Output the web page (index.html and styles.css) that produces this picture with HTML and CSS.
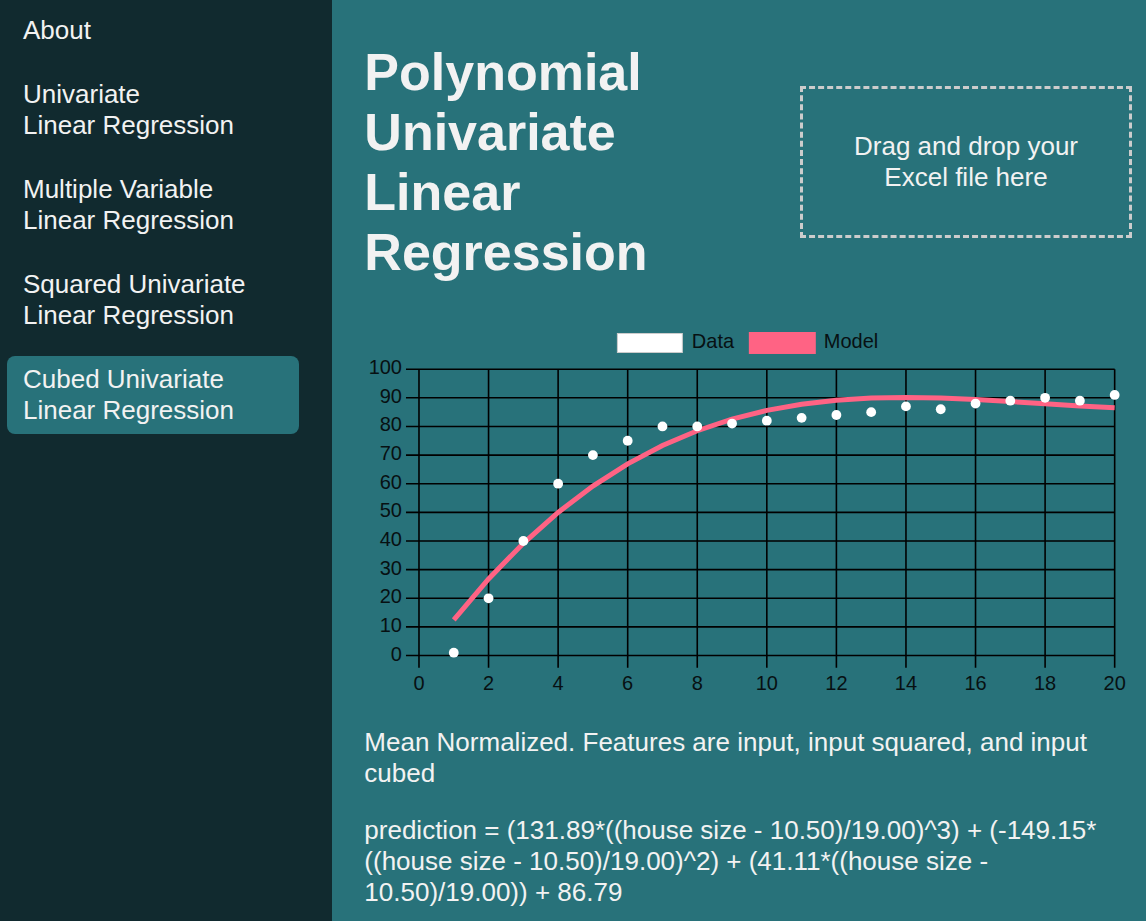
FILE: index.html
```html
<!DOCTYPE html>
<html lang="en">
<head>
<meta charset="utf-8">
<meta name="viewport" content="width=device-width, initial-scale=1">
<title>Polynomial Univariate Linear Regression</title>
<link rel="stylesheet" href="styles.css">
</head>
<body>
<div class="layout">
  <nav class="sidebar" aria-label="Models">
    <a class="nav-link" href="#about">About</a>
    <a class="nav-link" href="#univariate">Univariate<br>Linear Regression</a>
    <a class="nav-link" href="#multiple">Multiple Variable<br>Linear Regression</a>
    <a class="nav-link" href="#squared">Squared Univariate<br>Linear Regression</a>
    <a class="nav-link active" href="#cubed" aria-current="page">Cubed Univariate<br>Linear Regression</a>
  </nav>
  <main class="content">
    <header class="page-header">
      <h1 class="title">Polynomial Univariate Linear Regression</h1>
      <button class="drop-zone" type="button">Drag and drop your Excel file here</button>
    </header>
    <svg class="chart" viewBox="0 0 768 380" role="img" aria-label="Data and model chart">
      <g id="grid" class="grid"></g>
      <g id="labels" class="chart-text"></g>
      <polyline id="model" class="model-line"></polyline>
      <g id="data" class="data-points"></g>
      <rect class="key-data" x="253.5" y="13.5" width="65" height="19"></rect>
      <text class="chart-text" x="328" y="28">Data</text>
      <rect class="key-model" x="385" y="12" width="67" height="22"></rect>
      <text class="chart-text" x="460" y="28">Model</text>
    </svg>
    <p class="note">Mean Normalized. Features are input, input squared, and input cubed</p>
    <p class="note">prediction = (131.89*((house size - 10.50)/19.00)^3) + (-149.15*((house size - 10.50)/19.00)^2) + (41.11*((house size - 10.50)/19.00)) + 86.79</p>
  </main>
</div>
<script src="chart.js"></script>
</body>
</html>
```
FILE: styles.css
```css
* { box-sizing: border-box; }

body {
  margin: 0;
  background: #28727a;
  color: #f2f2f2;
  font: 26px/31px "Liberation Sans", Arial, sans-serif;
}

.layout {
  display: flex;
  min-height: 100vh;
}

.sidebar {
  flex: 0 0 29%;
  display: flex;
  flex-direction: column;
  gap: 17px;
  padding: 7px 33px 7px 7px;
  background: #112a2f;
}

.nav-link {
  padding: 8px 16px;
  border-radius: 8px;
  color: inherit;
  text-decoration: none;
}

.nav-link.active { background: #28727a; }

.content {
  flex: 1;
  min-width: 0;
  padding: 42px 14px 13px 32px;
}

.page-header {
  display: grid;
  grid-template-columns: 1fr 332px;
  column-gap: 52px;
  align-items: center;
  margin-bottom: 38px;
}

.title {
  margin: 0;
  font-size: 52px;
  line-height: 60px;
}

.drop-zone {
  padding: 42px;
  border: 3px dashed #ccc;
  background: transparent;
  color: inherit;
  font: inherit;
  text-align: center;
  cursor: pointer;
}

.chart {
  display: block;
  width: 100%;
  height: auto;
  margin-bottom: 27px;
}

.chart-text {
  fill: #071012;
  font-size: 20px;
}

.end { text-anchor: end; }
.middle { text-anchor: middle; }

.grid {
  stroke: #000;
  stroke-width: 1.6;
}

.model-line {
  fill: none;
  stroke: #ff6384;
  stroke-width: 5;
}

.data-points { fill: #fff; }

.key-data {
  fill: #fff;
  stroke: #ccc;
}

.key-model { fill: #ff6384; }

.note { margin: 0 0 26px; }
.note:last-child { margin-bottom: 0; }
```
FILE: chart.js
```js
const SVG = "http://www.w3.org/2000/svg";
const px = x => 55 + x * 34.8;
const py = y => 335.7 - y * 2.865;

function add(parentId, name, attrs, text) {
  const el = document.createElementNS(SVG, name);
  for (const key in attrs) el.setAttribute(key, attrs[key]);
  if (text !== undefined) el.textContent = text;
  document.getElementById(parentId).appendChild(el);
}

for (let v = 0; v <= 100; v += 10) {
  add("grid", "line", { x1: 42, x2: px(20), y1: py(v), y2: py(v) });
  add("labels", "text", { class: "end", x: 38, y: py(v) + 5 }, v);
}
for (let v = 0; v <= 20; v += 2) {
  add("grid", "line", { x1: px(v), x2: px(v), y1: py(100), y2: 348 });
  add("labels", "text", { class: "middle", x: px(v), y: 370 }, v);
}

const data = [1, 20, 40, 60, 70, 75, 80, 80, 81, 82, 83, 84, 85, 87, 86, 88, 89, 90, 89, 91];
data.forEach((y, i) => add("data", "circle", { cx: px(i + 1), cy: py(y), r: 4.9 }));

const points = data.map((_, i) => {
  const u = (i + 1 - 10.5) / 19;
  const y = 131.89 * u ** 3 - 149.15 * u ** 2 + 41.11 * u + 86.79;
  return px(i + 1) + "," + py(y);
});
document.getElementById("model").setAttribute("points", points.join(" "));
```
